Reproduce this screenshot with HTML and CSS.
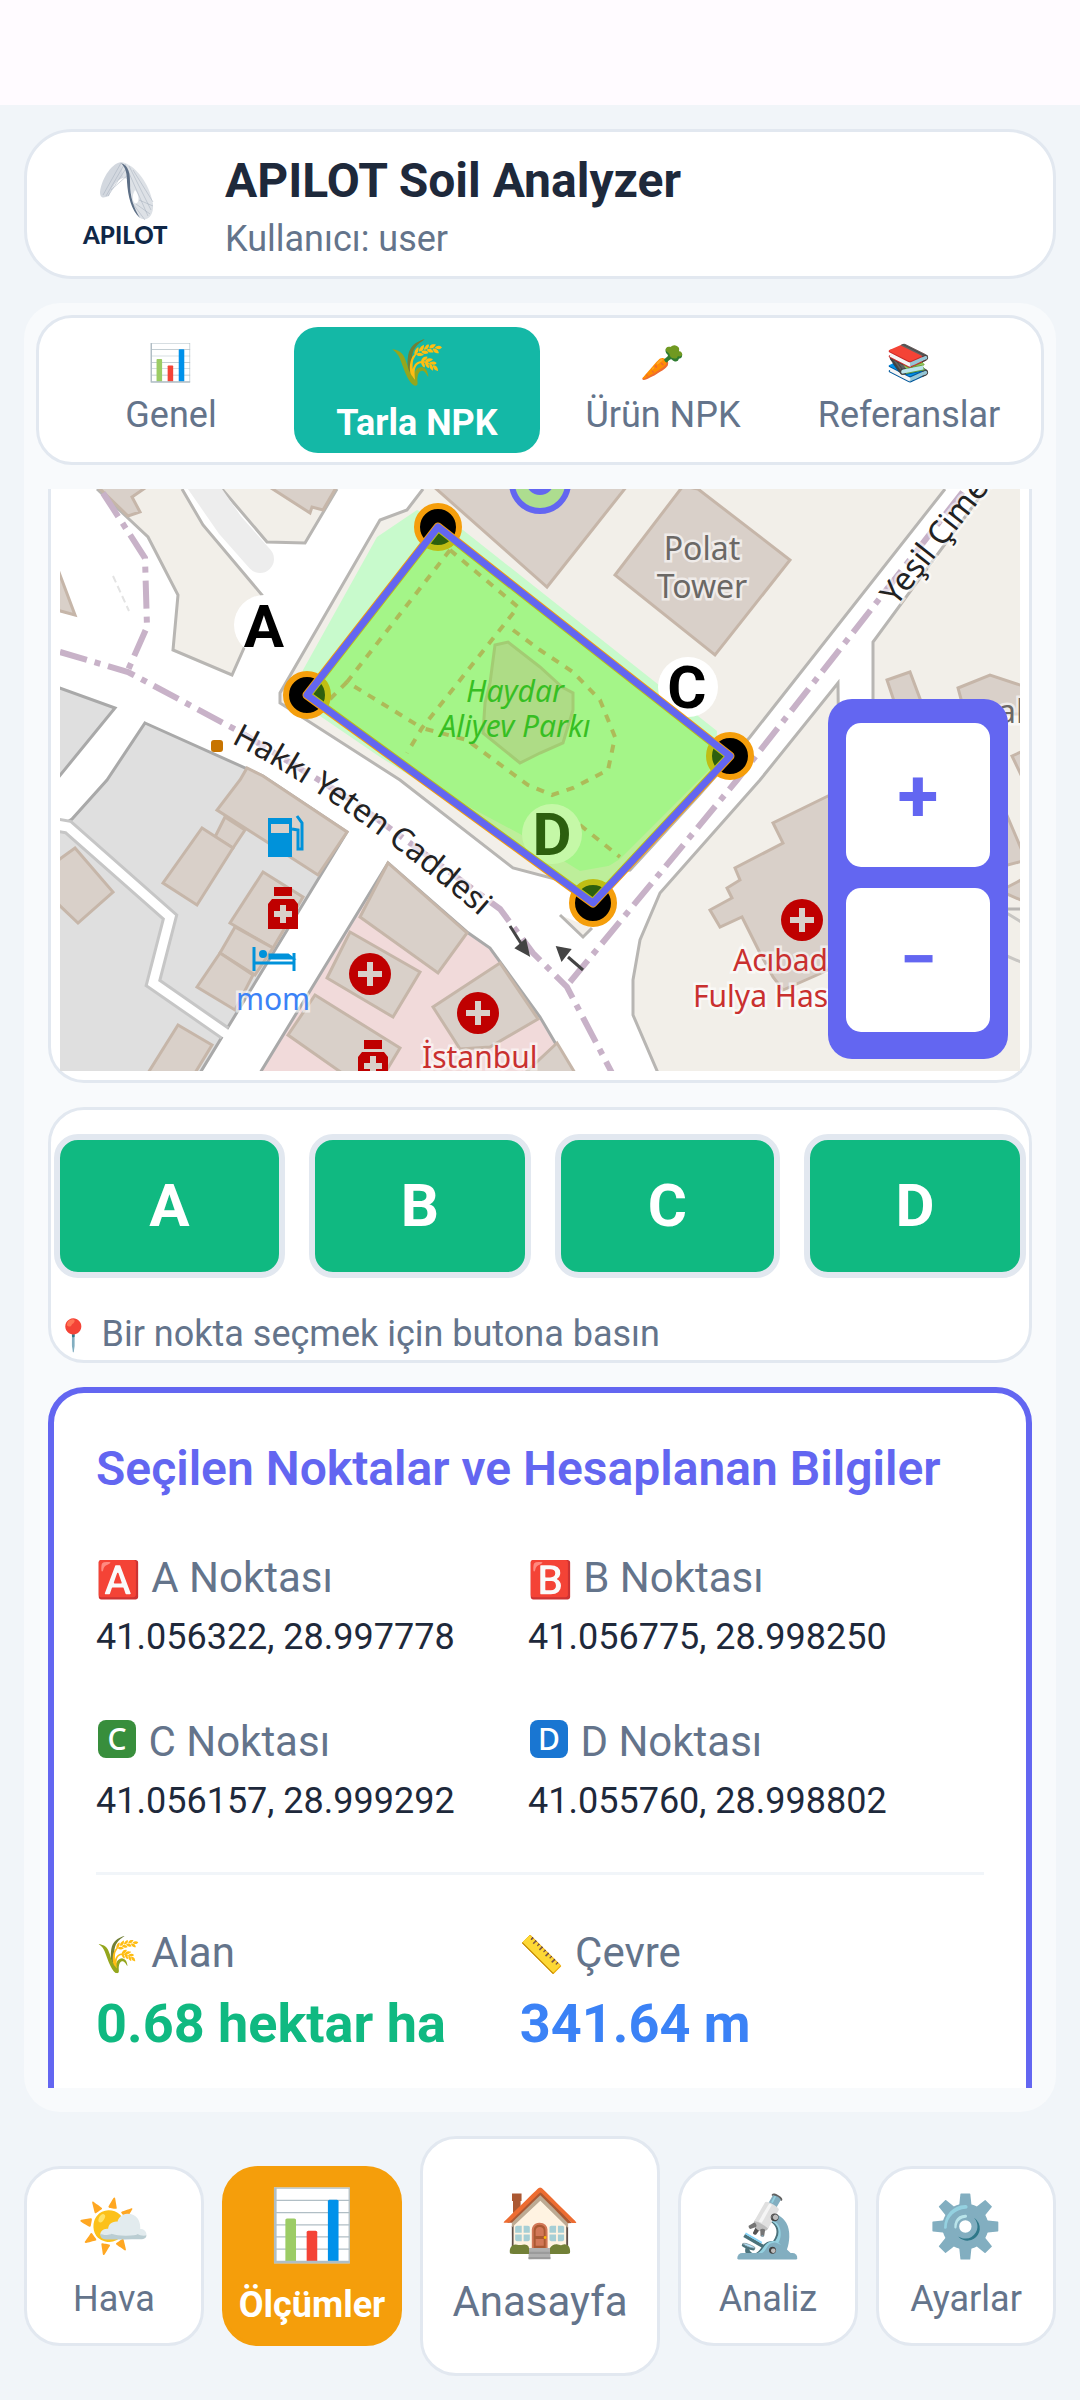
FILE: index.html
```html
<!DOCTYPE html>
<html lang="tr">
<head>
    <meta charset="UTF-8">
    <meta name="viewport" content="width=device-width, initial-scale=1">
    <title>APILOT Soil Analyzer</title>
    <link rel="stylesheet" href="styles.css">
</head>
<body>
<div class="app">
    <header class="header card">
        <svg class="logo" viewBox="0 0 150 144">
            <path d="M71 30 C62 30 51 45 49 60 C49 67 53 66 58 64 C62 52 68 46 73 46 Z" fill="#d3d8df"/>
            <path d="M70 30 C84 32 99 52 102 72 C103 84 96 90 89 86 C83 80 81 68 79 54 C77 46 75 46 72 46 Z" fill="#dde1e6"/>
            <path d="M84 58 C80 64 82 73 86 71 C89 68 87 61 84 58 Z" fill="#fff"/>
            <g fill="none" stroke="#a3adba" stroke-width="0.5">
                <path d="M70 31 L52 63 M73 33 L55 64 M76 35 L57 64 M78 42 L60 58"/>
                <path d="M74 32 L97 84 M78 34 L100 78 M82 38 L102 70 M82 72 L94 88 M85 72 L99 82 M88 68 L102 74"/>
            </g>
            <path d="M70 31 C78 34 79 42 79 50 C79 66 83 76 89 86 C80 78 77 64 76 50 C76 42 75 36 70 31 Z" fill="#5d6f86"/>
            <text x="32" y="112" class="logo-text">APILOT</text>
        </svg>
        <div class="header-text">
            <h1>APILOT Soil Analyzer</h1>
            <p>Kullanıcı: user</p>
        </div>
    </header>

    <main class="panel">
        <div class="tabs card">
            <button class="tab"><span class="tab-icon">📊</span>Genel</button>
            <button class="tab active"><span class="tab-icon">🌾</span>Tarla NPK</button>
            <button class="tab"><span class="tab-icon">🥕</span>Ürün NPK</button>
            <button class="tab"><span class="tab-icon">📚</span>Referanslar</button>
        </div>

        <div class="scroll">
            <section class="map-card">
                <div class="map">
                    <svg class="map-svg" viewBox="0 0 960 582">
                        <rect width="960" height="582" fill="#fff"/>
                        <!-- land blocks -->
                        <g fill="#f2efe9" stroke="#b8b6b3" stroke-width="3">
                            <path d="M37 0 L70 31 L88 48 L118 106 L113 161 L172 186 L184 159 L202 106 L143 36 L122 0"/>
                            <path d="M162 0 L207 53 L245 54 L277 0"/>
                            <path d="M363 0 L347 21 L320 31 L220 204 L220 214 L340 291 L453 379 L495 390 L570 381 L640 305 L690 248 L885 0"/>
                            <path d="M598 584 L573 526 L573 491 L580 451 L600 404 L700 291 L778 194 L780 400 L963 400 L963 584 Z"/>
                            <path d="M927 -2 L813 153 L813 420 L963 420 L963 -2 Z"/>
                            <path d="M500 426 L523 448 L532 439"/>
                        </g>
                        <path d="M138 -10 L170 36 L200 70" fill="none" stroke="#ededed" stroke-width="28" stroke-linecap="round"/>
                        <!-- grey blocks -->
                        <g fill="#dfdfdf" stroke="#a9a9a9" stroke-width="3">
                            <path d="M-3 198 L55 219 L-3 290"/>
                            <path d="M85 234 L203 287 L287 343 L140 584 L-3 584 L-3 340 L12 330 L47 291 Z"/>
                        </g>
                        <path d="M-4 336 L8 338 L110 428 L93 494 L165 544" fill="none" stroke="#c6c6c6" stroke-width="15"/>
                        <path d="M-4 336 L8 338 L110 428 L93 494 L172 549" fill="none" stroke="#fff" stroke-width="9"/>
                        <path d="M328 374 L407 443 L430 459 L480 528 L513 584 L200 584 Z" fill="#f1dada" stroke="#a9a9a9" stroke-width="3"/>
                        <!-- park -->
                        <path d="M357 21 L317 48 L243 181 L238 212 L320 268 L400 318 L470 370 L520 395 L560 370 L655 275 L657 242 L403 41 Z" fill="#c8facc"/>
                        <path d="M320 262 L400 313 L460 345 L520 382 L565 374 L533 414 Z" fill="#f2efe9"/>
                        <!-- buildings -->
                        <g fill="#d9d0c9" stroke="#c6b6a9" stroke-width="3">
                            <path d="M37 -3 L88 -3 L72 8 L80 23 L68 27 Z"/>
                            <path d="M208 -3 L250 24 L252 18 L263 21 L277 -3 Z"/>
                            <path d="M-3 78 L15 126 L-3 121 Z"/>
                            <path d="M180 291 L187 279 L203 287 L287 343 L258 386 L207 353 L157 321 Z"/>
                            <path d="M165 328 L185 341 L173 359 L155 348 Z"/>
                            <path d="M142 339 L173 359 L137 416 L103 394 Z"/>
                            <path d="M15 359 L53 403 L18 434 L-3 414 L-3 372 Z"/>
                            <path d="M203 383 L243 408 L213 459 L170 434 Z"/>
                            <path d="M175 438 L213 459 L195 486 L160 464 Z"/>
                            <path d="M160 464 L193 486 L175 521 L137 498 Z"/>
                            <path d="M118 536 L152 556 L135 584 L88 584 Z"/>
                            <path d="M328 374 L407 444 L378 484 L300 428 Z"/>
                            <path d="M290 443 L360 483 L333 528 L267 489 Z"/>
                            <path d="M255 506 L340 559 L325 584 L282 584 L228 546 Z"/>
                            <path d="M440 474 L478 530 L430 558 L400 560 L373 518 Z"/>
                            <path d="M465 584 L497 554 L515 584 Z"/>
                            <path d="M373 -3 L487 98 L567 -3 Z"/>
                            <path d="M623 -3 L638 0 L730 71 L655 166 L555 86 Z"/>
                            <path d="M827 191 L850 183 L862 215 L835 215 Z"/>
                            <path d="M898 199 L930 186 L963 197 L963 225 L905 225 Z"/>
                            <path d="M952 267 L963 262 L963 290 Z"/>
                            <path d="M940 310 L963 364 L963 372 L940 378 Z"/>
                            <path d="M940 402 L963 390 L963 412 Z"/>
                            <path d="M770 306 L713 334 L723 354 L675 379 L680 391 L667 399 L672 409 L650 421 L660 438 L682 428 L700 464 L713 488 L723 501 L757 486 L770 480 Z"/>
                            <path d="M435 156 L448 153 L480 178 L502 198 L513 204 L513 221 L503 254 L480 264 L460 274 L423 244 L425 214 L430 194 Z"/>
                        </g>
                        <path d="M940 420 L963 434 M940 464 L963 474" stroke="#c8c6c3" stroke-width="3"/>
                        <path d="M53 87 L69 122" stroke="#e3e3e3" stroke-width="2" stroke-dasharray="7 4"/>
                        <!-- admin borders -->
                        <g fill="none" stroke="#c8b2c8" stroke-width="6" stroke-dasharray="28 8 6 8">
                            <path d="M43 4 L85 69 L87 138 L68 181"/>
                            <path d="M0 163 L68 183 L180 243 L290 310 L440 420 L473 464 L507 498 L552 584"/>
                            <path d="M510 493 L677 291 L813 118 L905 0"/>
                        </g>
                        <!-- park paths -->
                        <g fill="none" stroke="#d89a7c" stroke-width="4" stroke-dasharray="8 8">
                            <path d="M390 61 L287 193 L362 239"/>
                            <path d="M390 61 L458 118 L362 239 L347 264"/>
                            <path d="M453 141 L480 161 L513 183 L540 211 L555 248 L548 281 L513 299 L492 306 L468 296 L407 251 L362 239"/>
                            <path d="M520 336 L560 368"/>
                            <path d="M287 193 L270 210"/>
                        </g>
                        <!-- street and place names -->
                        <path id="hakki" d="M171 254 C235 286 340 352 460 464" fill="none"/>
                        <path id="yesil" d="M836 118 L970 -52" fill="none"/>
                        <g class="map-label">
                            <text class="street"><textPath href="#hakki">Hakkı Yeten Caddesi</textPath></text>
                            <text class="street"><textPath href="#yesil">Yeşil Çimen</textPath></text>
                            <text class="tower" x="642" y="71" text-anchor="middle">Polat</text>
                            <text class="tower" x="642" y="109" text-anchor="middle">Tower</text>
                            <text class="tower" x="938" y="234">al</text>
                            <text class="hotel" x="213" y="521" text-anchor="middle">mom</text>
                            <text class="hospital" x="362" y="579">İstanbul</text>
                            <text class="hospital" x="673" y="482">Acıbadem</text>
                            <text class="hospital" x="633" y="518">Fulya Hastanesi</text>
                        </g>
                        <g class="park-name">
                            <text x="455" y="213" text-anchor="middle">Haydar</text>
                            <text x="455" y="248" text-anchor="middle">Aliyev Parkı</text>
                        </g>
                        <!-- poi icons -->
                        <rect x="151" y="251" width="12" height="12" rx="3" fill="#c77400"/>
                        <g fill="none" stroke="#0092da" stroke-width="3">
                            <path d="M208 329 H232 V368 H208 Z M211 335 V344 H229 V335 Z" fill="#0092da" fill-rule="evenodd" stroke="none"/>
                            <path d="M232 340 L238 341 V360 H242 V334 L237 327"/>
                            <path d="M194 458 V482 M234 464 V482 M194 474 H234"/>
                            <path d="M210 466 H228 L232 469 H210 Z" fill="#0092da"/>
                            <circle cx="203" cy="465" r="4" fill="#0092da" stroke="none"/>
                        </g>
                        <g fill="#bf0000">
                            <path d="M214 398 H232 V407 H214 Z M212 410 H234 L238 415 V440 H208 V415 Z"/>
                            <path d="M304 551 H322 V560 H304 Z M302 563 H324 L328 568 V584 H298 V568 Z"/>
                            <circle cx="310" cy="485" r="21"/>
                            <circle cx="418" cy="524" r="21"/>
                            <circle cx="742" cy="431" r="21"/>
                        </g>
                        <path d="M223 416 V434 M214 425 H232 M313 567 V584 M304 577 H322 M310 473 V497 M298 485 H322 M418 512 V536 M406 524 H430 M742 419 V443 M730 431 H754" stroke="#d9d0c9" stroke-width="6"/>
                        <g fill="#444" stroke="#444" stroke-width="3">
                            <path d="M450 437 L462 456"/>
                            <path d="M468 465 L457 459 L465 452 Z"/>
                            <path d="M523 481 L508 468"/>
                            <path d="M498 459 L509 461 L502 470 Z"/>
                        </g>
                        <!-- markers -->
                        <circle cx="480" cy="-6" r="28" fill="#addd8f" stroke="#6366f1" stroke-width="6"/>
                        <circle cx="480" cy="-8" r="14" fill="#6366f1"/>
                        <g stroke="#f59e0b" stroke-width="6">
                            <circle cx="378" cy="38" r="21"/>
                            <circle cx="247" cy="206" r="21"/>
                            <circle cx="670" cy="267" r="21"/>
                            <circle cx="533" cy="414" r="21"/>
                        </g>
                        <g fill="#fff">
                            <circle cx="204" cy="136" r="30"/>
                            <circle cx="628" cy="198" r="30"/>
                            <circle cx="492" cy="345" r="30"/>
                        </g>
                        <g class="marker-label" text-anchor="middle">
                            <text x="204" y="158">A</text>
                            <text x="627" y="219">C</text>
                            <text x="492" y="366">D</text>
                        </g>
                        <!-- field polygon -->
                        <path d="M378 38 L670 267 L533 414 L247 206 Z" fill="none" stroke="#f59e0b" stroke-width="9" stroke-linejoin="round"/>
                        <path d="M378 38 L670 267 L533 414 L247 206 Z" fill="#6eee23" fill-opacity="0.4"/>
                        <path d="M378 38 L670 267 L533 414 L247 206 Z" fill="none" stroke="#6366f1" stroke-width="7" stroke-linejoin="round"/>
                    </svg>
                    <div class="zoom">
                        <button class="zoom-in">+</button>
                        <button>−</button>
                    </div>
                </div>
            </section>

            <section class="points card">
                <div class="point-buttons">
                    <button>A</button>
                    <button>B</button>
                    <button>C</button>
                    <button>D</button>
                </div>
                <p class="hint"><span class="emoji">📍</span> Bir nokta seçmek için butona basın</p>
            </section>

            <section class="info">
                <h2>Seçilen Noktalar ve Hesaplanan Bilgiler</h2>
                <div class="coords">
                    <div>
                        <h3><span class="emoji">🅰️</span> A Noktası</h3>
                        <p>41.056322, 28.997778</p>
                    </div>
                    <div>
                        <h3><span class="emoji">🅱️</span> B Noktası</h3>
                        <p>41.056775, 28.998250</p>
                    </div>
                    <div>
                        <h3><span class="badge green">C</span> C Noktası</h3>
                        <p>41.056157, 28.999292</p>
                    </div>
                    <div>
                        <h3><span class="badge blue">D</span> D Noktası</h3>
                        <p>41.055760, 28.998802</p>
                    </div>
                </div>
                <div class="stats">
                    <div>
                        <h3><span class="emoji">🌾</span> Alan</h3>
                        <p class="area">0.68 hektar ha</p>
                    </div>
                    <div>
                        <h3><span class="emoji">📏</span> Çevre</h3>
                        <p class="perimeter">341.64 m</p>
                    </div>
                </div>
            </section>
        </div>
    </main>

    <nav class="nav">
        <button class="nav-item"><span class="nav-icon">🌤️</span>Hava</button>
        <button class="nav-item active"><span class="nav-icon">📊</span>Ölçümler</button>
        <button class="nav-item home"><span class="nav-icon">🏠</span>Anasayfa</button>
        <button class="nav-item"><span class="nav-icon">🔬</span>Analiz</button>
        <button class="nav-item"><span class="nav-icon">⚙️</span>Ayarlar</button>
    </nav>
</div>
</body>
</html>
```
FILE: styles.css
```css
* {
    margin: 0;
    padding: 0;
    box-sizing: border-box;
}
body {
    background: #f1f5f9;
    font-family: Roboto, "Noto Color Emoji", sans-serif;
    font-size: 36px;
    line-height: 42px;
    color: #64748b;
}
button {
    font: inherit;
    color: inherit;
    background: none;
    border: none;
    cursor: pointer;
}
.app {
    height: 100vh;
    display: flex;
    flex-direction: column;
    gap: 24px;
    padding: 24px;
    border-top: 105px solid #fffbff;
}
.card {
    background: #fff;
    border: 3px solid #e2e8f0;
    border-radius: 36px;
}

/* header */
.header {
    display: flex;
    align-items: center;
    gap: 24px;
    padding: 0 24px;
    border-radius: 48px;
}
.logo {
    width: 150px;
    height: 144px;
}
.logo-text {
    font: 900 24px Lato, sans-serif;
    fill: #0f2747;
}
.header-text {
    padding-top: 4px;
}
h1 {
    font-size: 48px;
    line-height: 56px;
    font-weight: 700;
    color: #1e293b;
    margin-bottom: 9px;
}

/* panel */
.panel {
    flex: 1;
    min-height: 0;
    display: flex;
    flex-direction: column;
    gap: 24px;
    padding: 12px 12px 24px;
    background: #f8fafc;
    border-radius: 36px;
}
.tabs {
    display: flex;
    padding: 9px;
}
.tab {
    flex: 1;
    height: 126px;
    display: flex;
    flex-direction: column;
    align-items: center;
    justify-content: center;
    gap: 12px;
    border-radius: 24px;
}
.tab-icon {
    line-height: 38px;
}
.tab.active {
    background: #14b8a6;
    color: #fff;
    font-weight: 700;
}
.tab.active .tab-icon {
    font-size: 45px;
    line-height: 54px;
}
.scroll {
    flex: 1;
    min-height: 0;
    overflow: hidden;
    margin: 0 12px;
}

/* map */
.map-card {
    padding: 0 9px 9px;
    margin-bottom: 24px;
    background: #fff;
    border: 3px solid #e2e8f0;
    border-top: none;
    border-radius: 0 0 36px 36px;
}
.map {
    position: relative;
}
.map-svg {
    display: block;
    width: 100%;
}
.map-label {
    font-family: "Noto Sans", sans-serif;
    font-size: 30px;
    paint-order: stroke;
    stroke: rgba(255, 255, 255, 0.6);
    stroke-width: 5px;
}
.street {
    font-size: 32px;
    fill: #222;
}
.tower {
    font-size: 32px;
    fill: #6b6865;
}
.hotel {
    fill: #3b82f6;
}
.hospital {
    fill: #c9302f;
}
.park-name {
    font: italic 30px "Noto Sans", sans-serif;
    fill: #12a023;
}
.marker-label {
    font-size: 60px;
    font-weight: 700;
    fill: #000;
}
.zoom {
    position: absolute;
    right: 12px;
    bottom: 12px;
    width: 180px;
    display: flex;
    flex-direction: column;
    gap: 21px;
    padding: 24px 18px 27px;
    background: #6366f1;
    border-radius: 24px;
}
.zoom button {
    height: 144px;
    background: #fff;
    border-radius: 15px;
    color: #6366f1;
    font-size: 66px;
    font-weight: 700;
}
.zoom .zoom-in {
    font-size: 75px;
}

/* point buttons */
.points {
    padding: 24px 3px 0;
    margin-bottom: 24px;
}
.point-buttons {
    display: grid;
    grid-template-columns: 77fr 74fr 75fr 74fr;
    gap: 24px;
}
.point-buttons button {
    height: 144px;
    background: #10b981;
    border: 6px solid #e2e8f0;
    border-radius: 24px;
    color: #fff;
    font-size: 60px;
    font-weight: 700;
}
.hint {
    margin-top: 32px;
    line-height: 49px;
}
.hint .emoji {
    font-size: 31px;
}

/* info card */
.info {
    padding: 48px 42px 96px;
    background: #fff;
    border: 6px solid #6366f1;
    border-radius: 36px;
}
h2 {
    font-size: 48px;
    line-height: 56px;
    font-weight: 600;
    color: #6366f1;
    margin-bottom: 56px;
}
h3 {
    font-size: 42px;
    line-height: 50px;
    font-weight: 400;
}
h3 .emoji {
    font-size: 36px;
    line-height: 36px;
}
.badge {
    display: inline-block;
    width: 38px;
    height: 38px;
    margin: 0 2px;
    border-radius: 8px;
    color: #fff;
    font: 500 30px/38px "Noto Sans", sans-serif;
    text-align: center;
    vertical-align: 6px;
}
.green {
    background: #388e3c;
}
.blue {
    background: #1976d2;
}
.coords {
    display: grid;
    grid-template-columns: 17fr 19fr;
    gap: 59px 24px;
    padding-bottom: 50px;
    border-bottom: 3px solid #f1f5f9;
}
.coords p {
    margin-top: 13px;
    color: #1e293b;
}
.stats {
    display: flex;
    gap: 74px;
    padding-top: 53px;
}
.stats p {
    margin-top: 14px;
    font-size: 54px;
    line-height: 64px;
    font-weight: 700;
}
.area {
    color: #10b981;
}
.perimeter {
    color: #3b82f6;
}

/* bottom nav */
.nav {
    display: grid;
    grid-template-columns: 3fr 3fr 4fr 3fr 3fr;
    align-items: center;
    gap: 18px;
}
.nav-item {
    height: 180px;
    display: flex;
    flex-direction: column;
    align-items: center;
    justify-content: center;
    gap: 16px;
    background: #fff;
    border: 3px solid #e2e8f0;
    border-radius: 36px;
}
.nav-icon {
    font-size: 60px;
    line-height: 70px;
}
.nav-item.active {
    gap: 18px;
    background: #f59e0b;
    border-color: #f59e0b;
    color: #fff;
    font-weight: 700;
}
.nav-item.active .nav-icon {
    font-size: 69px;
    line-height: 80px;
}
.nav-item.home {
    height: 240px;
    font-size: 42px;
    line-height: 50px;
}
.home .nav-icon {
    font-size: 66px;
    line-height: 76px;
}
```
